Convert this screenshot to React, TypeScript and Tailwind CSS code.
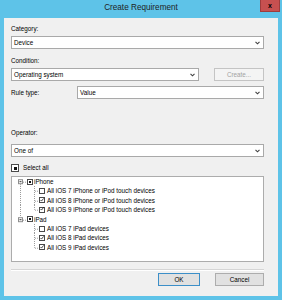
import React from "react";

const font = { fontFamily: '"Liberation Sans", Arial, sans-serif' };

function Chevron() {
  return (
    <svg width="5" height="4" viewBox="0 0 5 4" className="shrink-0">
      <path d="M0.5 0.8 L2.5 2.8 L4.5 0.8" fill="none" stroke="#404040" strokeWidth="1.1" />
    </svg>
  );
}

function Dropdown({ value, className }: { value: string; className?: string }) {
  return (
    <div
      className={`h-[13px] bg-white border border-[#a9a9a9] flex items-center justify-between pl-[2px] pr-[3px] text-[6.3px] text-black ${className ?? ""}`}
    >
      <span>{value}</span>
      <Chevron />
    </div>
  );
}

function Check({ state, big }: { state: "on" | "off" | "mixed"; big?: boolean }) {
  const size = big ? "w-[8px] h-[8px]" : "w-[6px] h-[6px]";
  return (
    <span className={`${size} shrink-0 border border-[#4a4a4a] bg-white flex items-center justify-center`}>
      {state === "mixed" && <span className={big ? "w-[3px] h-[3px] bg-[#111]" : "w-[2px] h-[2px] bg-[#111]"} />}
      {state === "on" && (
        <svg width="6" height="6" viewBox="0 0 6 6" className="-mt-[1px]">
          <path d="M0.8 3 L2.3 4.6 L5.4 0.6" fill="none" stroke="#111" strokeWidth="1.1" />
        </svg>
      )}
    </span>
  );
}

const H = 9.4;
const dot = { stroke: "#9a9a9a", strokeWidth: 1, strokeDasharray: "1 1" };

function ParentLines({ first }: { first: boolean }) {
  const c = H / 2;
  return (
    <svg width="14" height={H} viewBox={`0 0 14 ${H}`} className="shrink-0">
      {first ? (
        <line x1="7.5" y1={c + 2.5} x2="7.5" y2={H} {...dot} />
      ) : (
        <line x1="7.5" y1="0" x2="7.5" y2={c - 2.5} {...dot} />
      )}
      <line x1="10" y1={c + 0.5} x2="13" y2={c + 0.5} {...dot} />
      <rect x="5.5" y={c - 2} width="4" height="4" fill="white" stroke="#8e8e8e" strokeWidth="1" />
      <line x1="6.5" y1={c} x2="8.5" y2={c} stroke="#333" strokeWidth="1" />
    </svg>
  );
}

function ChildLines({ rootLine, last }: { rootLine: boolean; last: boolean }) {
  const c = H / 2;
  return (
    <svg width="26" height={H} viewBox={`0 0 26 ${H}`} className="shrink-0">
      {rootLine && <line x1="7.5" y1="0" x2="7.5" y2={H} {...dot} />}
      <line x1="21.5" y1="0" x2="21.5" y2={last ? c : H} {...dot} />
      <line x1="22" y1={c + 0.5} x2="25.5" y2={c + 0.5} {...dot} />
    </svg>
  );
}

function ParentRow({ label, first }: { label: string; first: boolean }) {
  return (
    <div className="flex items-center" style={{ height: H }}>
      <ParentLines first={first} />
      <Check state="mixed" />
      <span className="ml-[1px] text-[6.3px] text-black">{label}</span>
    </div>
  );
}

function ChildRow({ label, on, rootLine, last }: { label: string; on: boolean; rootLine: boolean; last: boolean }) {
  return (
    <div className="flex items-center" style={{ height: H }}>
      <ChildLines rootLine={rootLine} last={last} />
      <Check state={on ? "on" : "off"} />
      <span className="ml-[2px] text-[6.3px] text-black">{label}</span>
    </div>
  );
}

function Button({ label, primary, disabled, className }: { label: string; primary?: boolean; disabled?: boolean; className?: string }) {
  const look = disabled
    ? "border-[#c4c4c4] bg-[#f4f4f4] text-[#a2a2a2]"
    : primary
      ? "border-[#3c8fc8] bg-[#e1e1e1] text-black"
      : "border-[#adadad] bg-[#e1e1e1] text-black";
  return (
    <div className={`h-[13px] border flex items-center justify-center text-[6.3px] ${look} ${className ?? ""}`}>
      {label}
    </div>
  );
}

export default function App() {
  return (
    <div className="w-[282px] h-[300px] bg-[#5ec3e8] flex flex-col overflow-hidden" style={font}>
      <div className="h-[18px] relative flex items-center justify-center">
        <span className="text-[8.2px] text-[#1e1e1e] -mt-[2px]">Create Requirement</span>
        <div className="absolute right-[2px] top-0 w-[20px] h-[12px] bg-[#c75050] border border-t-0 border-[#9e3c3c] flex items-center justify-center">
          <span className="text-[7px] font-bold text-black leading-none -mt-[1px]">x</span>
        </div>
      </div>

      <div className="mx-[4px] h-[278px] bg-[#f0f0f0] pl-[7px] pr-[14px] flex flex-col">
        <div className="mt-[7px] h-[8px] leading-[8px] text-[6.3px] text-black">Category:</div>
        <Dropdown value="Device" className="mt-[3px]" />

        <div className="mt-[8px] h-[8px] leading-[8px] text-[6.3px] text-black">Condition:</div>
        <div className="mt-[3px] flex items-center justify-between">
          <Dropdown value="Operating system" className="w-[188px]" />
          <Button label="Create..." disabled className="w-[50px]" />
        </div>

        <div className="mt-[5px] flex items-center">
          <span className="w-[66px] text-[6.3px] text-black">Rule type:</span>
          <Dropdown value="Value" className="flex-1" />
        </div>

        <div className="mt-[30px] h-[8px] leading-[8px] text-[6.3px] text-black">Operator:</div>
        <Dropdown value="One of" className="mt-[7px]" />

        <div className="mt-[7px] h-[8px] flex items-center">
          <Check state="mixed" big />
          <span className="ml-[4px] text-[6.3px] text-black">Select all</span>
        </div>

        <div className="mt-[4px] h-[86px] bg-white border border-[#acacac] pl-[1px] pt-0">
          <ParentRow label="iPhone" first />
          <ChildRow label="All iOS 7 iPhone or iPod touch devices" on={false} rootLine last={false} />
          <ChildRow label="All iOS 8 iPhone or iPod touch devices" on rootLine last={false} />
          <ChildRow label="All iOS 9 iPhone or iPod touch devices" on rootLine last />
          <ParentRow label="iPad" first={false} />
          <ChildRow label="All iOS 7 iPad devices" on={false} rootLine={false} last={false} />
          <ChildRow label="All iOS 8 iPad devices" on rootLine={false} last={false} />
          <ChildRow label="All iOS 9 iPad devices" on rootLine={false} last />
        </div>

        <div className="mt-[7px] h-[1px] bg-[#d5d5d5]" />
        <div className="h-[1px] bg-white" />

        <div className="mt-[2px] flex items-center justify-end">
          <Button label="OK" primary className="w-[42px]" />
          <Button label="Cancel" className="w-[49px] ml-[15px]" />
        </div>
      </div>
    </div>
  );
}
